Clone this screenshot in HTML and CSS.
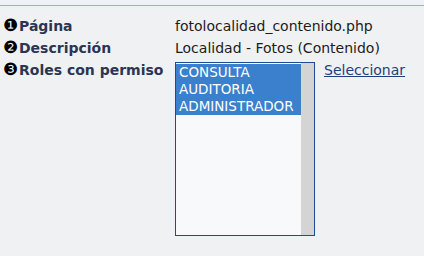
FILE: index.html
```html
<!DOCTYPE html>
<html lang="es">
<head>
    <meta charset="UTF-8">
    <title>Permisos de página</title>
    <link rel="stylesheet" href="styles.css">
</head>
<body>
    <div class="separador"></div>
    <div class="ficha">
        <div class="etiqueta"><span class="num">❶</span>Página</div>
        <div class="valor">fotolocalidad_contenido.php</div>

        <div class="etiqueta"><span class="num">❷</span>Descripción</div>
        <div class="valor">Localidad - Fotos (Contenido)</div>

        <div class="etiqueta"><span class="num">❸</span>Roles con permiso</div>
        <div class="valor roles">
            <div class="lista">
                <div class="opciones">
                    <div class="opcion sel">CONSULTA</div>
                    <div class="opcion sel">AUDITORIA</div>
                    <div class="opcion sel">ADMINISTRADOR</div>
                </div>
                <div class="barra"></div>
            </div>
            <a href="#" class="enlace">Seleccionar</a>
        </div>
    </div>
</body>
</html>
```

FILE: styles.css
```css
* {
    margin: 0;
    padding: 0;
    box-sizing: border-box;
}

body {
    background-color: #f0f1f3;
    font-family: "DejaVu Sans", Verdana, sans-serif;
    font-size: 14px;
    color: #1c1c1c;
    height: 256px;
    overflow: hidden;
}

.separador {
    margin-top: 5px;
    border-top: 1px solid #a3b0c4;
}

.ficha {
    display: grid;
    grid-template-columns: 172px 1fr;
    padding: 9px 0 0 3px;
}

.etiqueta {
    font-weight: bold;
    color: #2b3552;
    line-height: 22px;
    white-space: nowrap;
}

.num {
    display: inline-block;
    width: 16px;
    font-size: 17px;
    line-height: 17px;
    color: #000;
    font-weight: normal;
}

.valor {
    line-height: 22px;
}

.roles {
    display: flex;
    align-items: flex-start;
    gap: 9px;
    padding-top: 3px;
}

.lista {
    display: flex;
    width: 140px;
    height: 174px;
    border: 1px solid #1e4c94;
    background-color: #f8f9fb;
}

.opciones {
    flex: 1;
    padding-top: 1px;
    font-size: 13.5px;
}

.opcion {
    line-height: 17px;
    padding-left: 3px;
    color: #fff;
}

.sel {
    background-color: #3b80cc;
}

.barra {
    width: 13px;
    background-color: #d4d4d4;
}

.enlace {
    color: #1e3f80;
    line-height: 17px;
}
```
